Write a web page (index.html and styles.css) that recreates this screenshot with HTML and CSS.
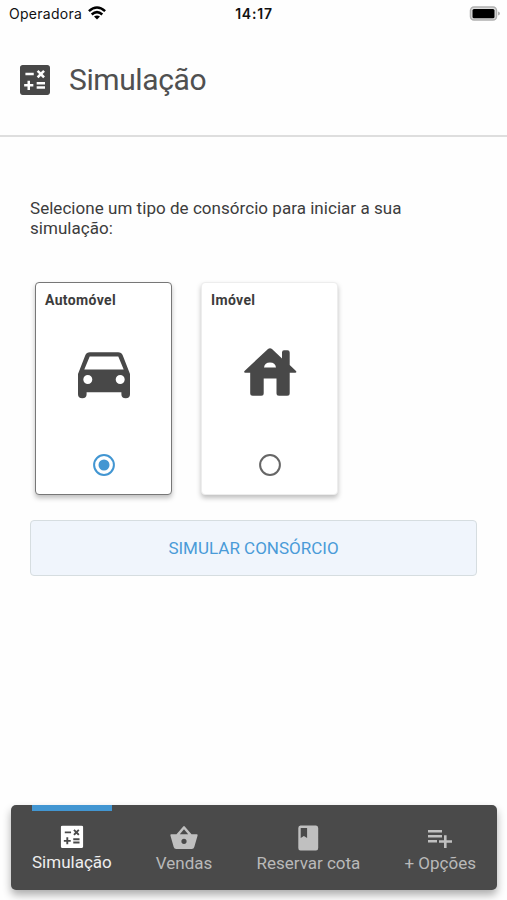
FILE: index.html
```html
<!DOCTYPE html>
<html lang="pt-BR">
<head>
<meta charset="utf-8">
<title>Simulação</title>
<link rel="stylesheet" href="styles.css">
</head>
<body>
<svg class="defs" aria-hidden="true">
  <symbol id="calc" viewBox="3 3 18 18">
    <path fill-rule="evenodd" d="M19.4 3H4.6C3.7 3 3 3.7 3 4.600v14.800c0 .9.700 1.600 1.600 1.600h14.800c.9 0 1.600-.7 1.600-1.600V4.600c0-.9-.7-1.600-1.600-1.600zM13.030 7.060L14.090 6l1.410 1.410L16.910 6l1.060 1.060-1.410 1.410 1.410 1.420-1.060 1.060-1.410-1.410-1.410 1.410-1.060-1.060 1.410-1.420zM6.250 7.720h5v1.500h-5zM11 15.950H9v2H7.500v-2h-2v-1.500h2v-2H9v2h2zM18 17.250h-5v-1.500h5zM18 14.750h-5v-1.500h5z"/>
  </symbol>
</svg>
<div class="statusbar">
  <div class="carrier"><span>Operadora</span>
    <svg class="wifi" viewBox="0 0 18 14"><g fill="none" stroke="#000" stroke-width="2.500"><path d="M.9 5.200Q9-2.200 17.100 5.200"/><path d="M3.700 8.500Q9 3.800 14.300 8.500"/></g><path d="M9 13.600L6 10.600Q9 8.200 12 10.600z"/></svg>
  </div>
  <div class="time">14:17</div>
  <svg class="battery" viewBox="0 0 32 16"><rect x="1.500" y="1" width="26" height="13" rx="3.500" fill="#ddd" stroke="#b0b0b0" stroke-width="1.500"/><rect x="3.500" y="3" width="22" height="9.200" rx="1.500"/><path d="M29 5.500q2 .5 2 2t-2 2z" fill="#b0b0b0"/></svg>
</div>
<header class="header">
  <svg class="header-icon"><use href="#calc"/></svg>
  <h1>Simulação</h1>
</header>
<main class="content">
  <p class="lead">Selecione um tipo de consórcio para iniciar a sua simulação:</p>
  <div class="cards">
    <div class="card selected">
      <h2>Automóvel</h2>
      <svg class="card-icon" viewBox="0 0 54 54"><path fill-rule="evenodd" d="M8.200 4.500Q9.500 1.200 13 1.200h28q3.500 0 4.800 3.300L53 23v20.300q0 4-4.300 4t-4.300-4v-2H9.600v2q0 4-4.300 4T1 43.300V23zM12.700 5.500L7.300 18.500h39.400L41.300 5.500zM10.800 24a4.500 4.500 0 1 0 0 9 4.500 4.500 0 0 0 0-9zM43.200 24a4.500 4.500 0 1 0 0 9 4.500 4.500 0 0 0 0-9z"/></svg>
      <svg class="radio" viewBox="0 0 22 22"><circle cx="11" cy="11" r="9.900"/><circle class="dot" cx="11" cy="11" r="5.500"/></svg>
    </div>
    <div class="card">
      <h2>Imóvel</h2>
      <svg class="card-icon" viewBox="0 0 54 54"><path fill-rule="evenodd" d="M1.500 20L25 -2Q27-3.500 29-2l10 9.500V1.500Q39-.7 41-.7h3.500q2.200 0 2.200 2.200v12.500l6.300 6q1 1.800-.8 1.800h-5.500v20.400q0 2.500-2.500 2.500H36q-2.500 0-2.500-2.500V27.500H20.700v14.700q0 2.500-2.500 2.500h-8.500q-2.500 0-2.500-2.500V21.800H2.300Q.5 21.800 1.500 20zM21 16.500h12q-.7-5-6-5t-6 5z"/></svg>
      <svg class="radio" viewBox="0 0 22 22"><circle cx="11" cy="11" r="9.900"/></svg>
    </div>
  </div>
  <button class="submit">SIMULAR CONSÓRCIO</button>
</main>
<nav class="tabs">
  <a class="tab active"><svg viewBox="0 0 28 26"><use href="#calc" x="2.700" y="1.500" width="22.600" height="22.600"/></svg><span>Simulação</span></a>
  <a class="tab"><svg viewBox="0 0 28 26"><path fill-rule="evenodd" d="M1.300 9.200H6.500L13 1.700Q14 .5 15 1.700l6.500 7.500h5.200q1.200 0 .9 1.200L24.300 22q-.5 2-2.500 2H6.200q-2 0-2.500-2L.4 10.400q-.3-1.200.9-1.200zM9.800 9.200h8.400L14 4.300zM14 13.700a2.600 2.600 0 1 0 0 5.200 2.600 2.600 0 0 0 0-5.200z"/></svg><span>Vendas</span></a>
  <a class="tab"><svg viewBox="0 0 28 26"><path fill-rule="evenodd" d="M6.500 .5h15.500Q24.200 .5 24.200 3v20q0 2.500-2.200 2.500H6.500Q4.300 25.500 4.300 23V3Q4.300 .5 6.500 .5zM6.700 3v10l3.200-2 3.200 2V3z"/></svg><span>Reservar cota</span></a>
  <a class="tab"><svg viewBox="0 0 28 26"><path d="M2 5h14v2.500H2zM2 10h14v2.500H2zM2 15h9v2.500H2zM18 10.200h2.600v5H26v2.500h-5.400V23H18v-5.300h-5v-2.500h5z"/></svg><span>+ Opções</span></a>
</nav>
</body>
</html>
```
FILE: styles.css
```css
* { box-sizing: border-box; }
body {
  margin: 0;
  height: 900px;
  overflow: hidden;
  display: flex;
  flex-direction: column;
  background: #fefefe;
  color: #3c3c3c;
  font-family: Roboto, sans-serif;
}
h1, h2, p { margin: 0; }
.defs { display: none; }
.statusbar {
  height: 28px;
  flex: none;
  display: grid;
  grid-template-columns: 1fr auto 1fr;
  align-items: center;
  padding: 0 6px 1px 9px;
  color: #111;
  font-family: Inter, sans-serif;
  font-size: 14px;
}
.carrier { display: flex; align-items: center; gap: 6px; letter-spacing: .27px; }
.wifi { width: 18px; height: 14px; margin-top: -2px; }
.time { font-weight: 600; letter-spacing: .8px; margin-right: 2px; }
.battery { width: 32px; height: 16px; justify-self: end; }
.header {
  height: 109px;
  flex: none;
  display: flex;
  align-items: center;
  gap: 19px;
  padding: 0 20px 4px;
  border-bottom: 2px solid #dedede;
}
.header-icon { width: 30px; height: 30px; fill: #484848; }
.header h1 { font-size: 30px; font-weight: 400; line-height: 36px; letter-spacing: -.4px; color: #505050; }
.content { flex: 1; padding: 62px 30px 0; }
.lead { font-size: 17px; line-height: 20px; letter-spacing: .04px; margin-top: -1px; }
.cards { display: flex; gap: 29px; padding: 44px 5px 0; }
.card {
  width: 137px;
  height: 213px;
  display: flex;
  flex-direction: column;
  align-items: center;
  padding: 7px 9px 18px;
  border: 1px solid #ededed;
  border-radius: 4px;
  background: #fff;
  box-shadow: 0 3px 5px rgba(0, 0, 0, .25);
}
.card.selected { border-color: #777; }
.card h2 { align-self: flex-start; font-size: 14px; line-height: 20px; font-weight: 700; letter-spacing: .35px; }
.card-icon { width: 54px; height: 54px; margin-top: 41px; fill: #484848; overflow: visible; }
.radio { width: 22px; height: 22px; margin-top: auto; fill: none; stroke: #666; stroke-width: 2; }
.selected .radio { stroke: #4296d2; }
.radio .dot { fill: #4296d2; stroke: none; }
.submit {
  display: block;
  width: 100%;
  height: 56px;
  margin-top: 25px;
  border: 1px solid #d6dde0;
  border-radius: 4px;
  background: #f0f5fc;
  color: #4a9bd8;
  font: 400 17px Roboto, sans-serif;
}
.tabs {
  flex: none;
  display: flex;
  justify-content: space-between;
  height: 85px;
  margin: 0 10px 10px 11px;
  padding: 0 21px;
  border-radius: 5px;
  background: #4a4a4a;
  box-shadow: 0 5px 9px rgba(0, 0, 0, .32);
}
.tab {
  display: flex;
  flex-direction: column;
  align-items: center;
  padding-top: 20px;
  color: #b9b9b9;
  fill: #c0c0c0;
  font-size: 17px;
  line-height: 24px;
  white-space: nowrap;
}
.tab svg { width: 28px; height: 26px; }
.tab.active { border-top: 6px solid #4296d2; padding-top: 13px; color: #eee; fill: #fff; }
```
